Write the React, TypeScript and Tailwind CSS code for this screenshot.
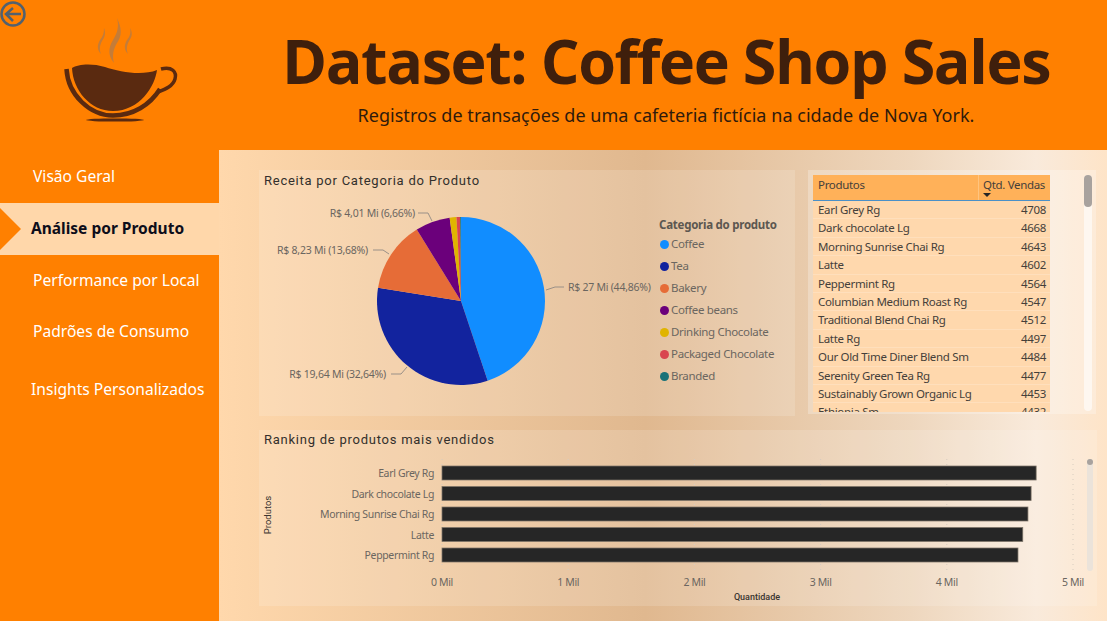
const font = "font-['Noto_Sans','Open_Sans',sans-serif]";

const navItems = [
  { label: 'Visão Geral', className: 'h-[52px] pl-[33px]' },
  { label: 'Análise por Produto', active: true, className: 'h-[52px] pl-[31px]' },
  { label: 'Performance por Local', className: 'h-[52px] pl-[33px]' },
  { label: 'Padrões de Consumo', className: 'h-[50px] pl-[33px]' },
  { label: 'Insights Personalizados', className: 'h-[66px] pl-[31px]' },
];

const slices = [
  { name: 'Coffee', value: 44.86, color: '#118DFF' },
  { name: 'Tea', value: 32.64, color: '#12239E' },
  { name: 'Bakery', value: 13.68, color: '#E66C37' },
  { name: 'Coffee beans', value: 6.66, color: '#6B007B' },
  { name: 'Drinking Chocolate', value: 1.3, color: '#E0B400' },
  { name: 'Packaged Chocolate', value: 0.7, color: '#D9464F' },
  { name: 'Branded', value: 0.16, color: '#197278' },
];

const rows = [
  ['Earl Grey Rg', 4708],
  ['Dark chocolate Lg', 4668],
  ['Morning Sunrise Chai Rg', 4643],
  ['Latte', 4602],
  ['Peppermint Rg', 4564],
  ['Columbian Medium Roast Rg', 4547],
  ['Traditional Blend Chai Rg', 4512],
  ['Latte Rg', 4497],
  ['Our Old Time Diner Blend Sm', 4484],
  ['Serenity Green Tea Rg', 4477],
  ['Sustainably Grown Organic Lg', 4453],
  ['Ethiopia Sm', 4432],
];

const bars = [
  ['Earl Grey Rg', 4708],
  ['Dark chocolate Lg', 4668],
  ['Morning Sunrise Chai Rg', 4643],
  ['Latte', 4602],
  ['Peppermint Rg', 4564],
] as const;

function pieSlices() {
  const cx = 197;
  const cy = 112;
  const r = 84;
  let start = 0;
  const total = slices.reduce((sum, s) => sum + s.value, 0);
  return slices.map((s) => {
    const end = start + (s.value / total) * Math.PI * 2;
    const x1 = cx + r * Math.sin(start);
    const y1 = cy - r * Math.cos(start);
    const x2 = cx + r * Math.sin(end);
    const y2 = cy - r * Math.cos(end);
    const large = end - start > Math.PI ? 1 : 0;
    const d = `M${cx} ${cy} L${x1} ${y1} A${r} ${r} 0 ${large} 1 ${x2} ${y2} Z`;
    start = end;
    return <path key={s.name} d={d} fill={s.color} />;
  });
}

function CoffeeLogo() {
  return (
    <svg width="219" height="150" viewBox="0 0 219 150" fill="none">
      <g fill="#C47C38">
        <path d="M117 18 C122 28 122 36 117 43 C113 50 112 56 114 63 C108 56 108 48 113 40 C118 32 119 26 117 18 Z" />
        <path d="M104 28 C106 33 105 37 102 41 C100 45 99 49 101 54 C97 50 97 45 100 40 C103 36 104 33 104 28 Z" />
        <path d="M130 28 C133 33 132 37 129 41 C127 45 126 49 128 54 C124 50 124 45 127 40 C130 36 131 33 130 28 Z" />
      </g>
      <path
        d="M72 68 C78 64 92 63 105 67 C120 72 142 76 157 70 C155 86 140 111 113 111 C90 111 73 90 72 68 Z"
        fill="#5A2A10"
      />
      <path d="M66.5 69 C68 95 90 115.5 113 115.5 C133 115.5 150 105 160 89" stroke="#5A2A10" strokeWidth="4.5" />
      <path d="M161 69 C172 66 177 72 175 79 C173 86 166 89 158 92" stroke="#5A2A10" strokeWidth="3.5" />
      <ellipse cx="115" cy="120" rx="29" ry="1.6" fill="#5A2A10" />
    </svg>
  );
}

function PieChart() {
  const label = 'fill-[#6b6660] text-[10.5px] tracking-[-0.25px]';
  return (
    <svg width="390" height="222" viewBox="0 0 390 222" fill="none" className={font}>
      {pieSlices()}
      <g stroke="#9a9087" strokeWidth="1">
        <path d="M154 24 H164 L168 32" />
        <path d="M109 61 H119 L125 65" />
        <path d="M282 101 L291 98 H300" />
        <path d="M127 185 H137 L143 178" />
      </g>
      <text x="151" y="28" textAnchor="end" className={label}>R$ 4,01 Mi (6,66%)</text>
      <text x="104" y="65" textAnchor="end" className={label}>R$ 8,23 Mi (13,68%)</text>
      <text x="304" y="102" className={label}>R$ 27 Mi (44,86%)</text>
      <text x="122" y="189" textAnchor="end" className={label}>R$ 19,64 Mi (32,64%)</text>
    </svg>
  );
}

function BarChart() {
  const label = 'fill-[#6b6660] text-[10.5px] tracking-[-0.35px]';
  const unit = 126.2;
  const x0 = 183;
  return (
    <svg width="838" height="146" viewBox="0 0 838 146" fill="none" className={font}>
      {[0, 1, 2, 3, 4, 5].map((t) => (
        <g key={t}>
          <line x1={x0 + t * unit} x2={x0 + t * unit} y1="2" y2="115" stroke="#d6ccc0" strokeDasharray="1 4" />
          <text x={x0 + t * unit} y="129" textAnchor="middle" className={label}>{t} Mil</text>
        </g>
      ))}
      {bars.map(([name, value], i) => (
        <g key={name}>
          <rect
            x={x0}
            y={9 + i * 20.5}
            width={(value / 1000) * unit}
            height="14"
            fill="#262626"
            stroke="#7d7468"
            strokeWidth="0.75"
          />
          <text x={x0 - 8} y={20 + i * 20.5} textAnchor="end" className={label}>{name}</text>
        </g>
      ))}
      <text
        transform="translate(12 58) rotate(-90)"
        textAnchor="middle"
        className="fill-[#3a3530] text-[9.5px] font-['Roboto',sans-serif]"
      >
        Produtos
      </text>
      <text x="498" y="143" textAnchor="middle" className="fill-[#3a3530] text-[9px] font-['Roboto',sans-serif] font-medium">
        Quantidade
      </text>
      <rect x="828" y="2" width="6" height="112" rx="3" fill="#ebe3da" />
      <circle cx="831" cy="5" r="3" fill="#a8a29e" />
    </svg>
  );
}

export default function App() {
  return (
    <div className={`relative flex h-[621px] w-[1107px] flex-col overflow-hidden bg-[#FF8000] ${font}`}>
      {/* back button */}
      <svg className="absolute left-0 top-0" width="26" height="28" viewBox="0 0 26 28" fill="none" stroke="#52616f" strokeWidth="2.5">
        <circle cx="13" cy="14" r="11.5" />
        <path d="M21 14 H6 M13 8 L6 14 L13 21" />
      </svg>

      <header className="flex h-[150px] shrink-0">
        <div className="w-[219px] shrink-0">
          <CoffeeLogo />
        </div>
        <div className="flex-1 pl-[6px] text-center">
          <h1 className="mt-[20px] text-[61px] font-bold leading-[82px] tracking-[-1.4px] text-[#3f1f0c] font-['Open_Sans',sans-serif]">
            Dataset: Coffee Shop Sales
          </h1>
          <p className="mt-[1px] text-[18px] leading-[24px] tracking-[0.04px] text-[#2f1a0c]">
            Registros de transações de uma cafeteria fictícia na cidade de Nova York.
          </p>
        </div>
      </header>

      <div className="flex flex-1">
        <nav className="w-[219px] shrink-0 pt-[1px]">
          {navItems.map((item) => (
            <div
              key={item.label}
              className={`relative flex items-center ${item.className} ${
                item.active ? 'bg-[#FFD7AA] text-[15.5px] font-bold text-[#0d0d1a]' : 'text-[15.6px] text-white'
              }`}
            >
              {item.active && (
                <span className="absolute left-0 top-[5px] h-0 w-0 border-y-[21px] border-l-[21px] border-y-transparent border-l-[#FF8000]" />
              )}
              {item.label}
            </div>
          ))}
        </nav>

        <main className="flex-1 bg-[linear-gradient(90deg,#ffd8ac_0%,#e0b88f_48%,#eed7be_78%,#f9eadb_92%,#fee4c8_100%)] pl-[40px] pt-[20px]">
          <div className="flex gap-[13px]">
            <section className="flex h-[246px] w-[536px] flex-col bg-white/15 pl-[5px]">
              <h2 className="mt-[2px] h-[17px] text-[13px] leading-[18px] tracking-[0.75px] text-[#33302c] font-['Roboto',sans-serif]">
                Receita por Categoria do Produto
              </h2>
              <div className="flex">
                <PieChart />
                <div className="ml-[5px] mt-[28px] text-[11.5px] tracking-[-0.33px] text-[#6b6660]">
                  <div className="text-[11.5px] font-bold leading-[16px] tracking-[-0.25px] text-[#5c5750]">Categoria do produto</div>
                  <ul>
                    {slices.map((s) => (
                      <li key={s.name} className="flex h-[22px] items-center gap-[2px] whitespace-nowrap">
                        <span className="ml-[1px] h-[9px] w-[9px] rounded-full" style={{ backgroundColor: s.color }} />
                        {s.name}
                      </li>
                    ))}
                  </ul>
                </div>
              </div>
            </section>

            <section className="flex h-[244px] w-[288px] gap-[34px] bg-white/25 pl-[5px] pt-[5px]">
              <div className="h-[237px] w-[237px] overflow-hidden bg-[#FFD8AD] text-[11.5px] tracking-[-0.32px] text-[#45403a]">
                <div className="flex h-[26px] border-b border-[#4a90c8] bg-[#FFB159]">
                  <div className="flex-1 border-r border-[#ffc47f] pl-[5px] pt-[1px] leading-[18px]">Produtos</div>
                  <div className="relative w-[71px] pl-[4px] pt-[1px] leading-[18px]">
                    Qtd. Vendas
                    <span className="absolute left-[4px] top-[18px] h-0 w-0 border-x-[4px] border-t-[4px] border-x-transparent border-t-[#262626]" />
                  </div>
                </div>
                {rows.map(([name, qty]) => (
                  <div key={name} className="flex h-[18.4px] items-center border-b border-[#ffdfbc]">
                    <div className="flex-1 whitespace-nowrap pl-[5px]">{name}</div>
                    <div className="w-[71px] pr-[4px] text-right">{qty}</div>
                  </div>
                ))}
              </div>
              <div className="h-[236px] w-[8px] rounded-full bg-white/60">
                <div className="h-[32px] w-[8px] rounded-full bg-[#a8a29e]" />
              </div>
            </section>
          </div>

          <section className="mt-[14px] h-[176px] w-[838px] bg-white/15">
            <h2 className="h-[19px] pl-[5px] pt-[1px] text-[13px] leading-[18px] tracking-[0.75px] text-[#33302c] font-['Roboto',sans-serif]">
              Ranking de produtos mais vendidos
            </h2>
            <div className="mt-[8px]">
              <BarChart />
            </div>
          </section>
        </main>
      </div>
    </div>
  );
}
